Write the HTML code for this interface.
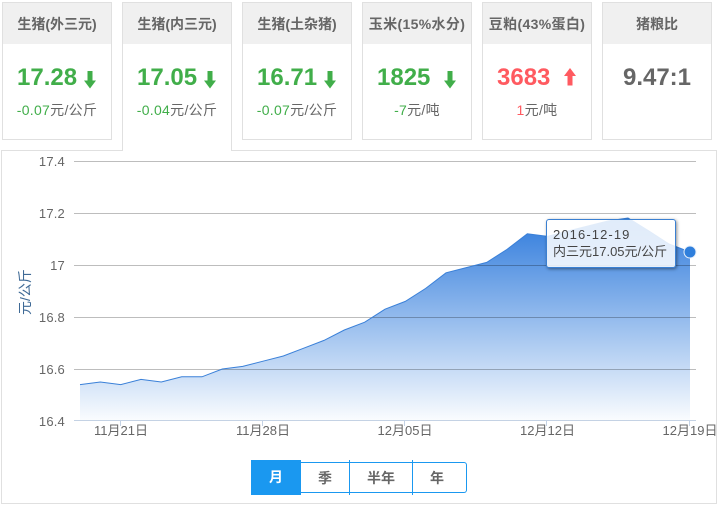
<!DOCTYPE html>
<html><head><meta charset="utf-8">
<style>
*{box-sizing:border-box}
html,body{margin:0;padding:0;background:#fff}
body{width:722px;height:510px;overflow:hidden;position:relative;font-family:"Liberation Sans","Noto Sans CJK SC",sans-serif;color:#666}
.card{position:absolute;top:2px;width:110px;height:138px;border:1px solid #e0e0e0;background:#fff;text-align:center}
.card .h{height:41px;background:#f0f0f0;font-size:14px;font-weight:bold;line-height:42px;color:#666;white-space:nowrap}
.card .w{letter-spacing:.35px}
.card .n{position:absolute;left:14px;top:61px;font-size:24px;font-weight:bold;line-height:28px;white-space:nowrap}
.card .s{position:absolute;left:0;right:0;top:98px;font-size:14px;line-height:18px;letter-spacing:.3px;white-space:nowrap}
.g{color:#41ae4a}.r{color:#ff5a60}
.card svg{position:absolute;left:81px;top:68px}
.tab{height:149px;border-bottom:0;z-index:3}
.box{position:absolute;left:1px;top:150px;width:716px;height:354px;border:1px solid #e0e0e0;background:#fff}
.tip{position:absolute;left:546px;top:219px;width:130px;height:49px;border:1px solid #3a80d2;border-radius:3px;background:rgba(255,255,255,.85);box-shadow:1px 1px 3px rgba(0,0,0,.45);font-size:13px;line-height:17px;padding:6px 0 0 6px;color:#444;white-space:nowrap;z-index:4}
.tip span{letter-spacing:1.1px}
.btns{position:absolute;left:0;top:0;font-size:14px;font-weight:bold;z-index:4}
.btns div{position:absolute;text-align:center;color:#666;white-space:nowrap}
</style></head><body>
<div class="box"></div>
<div class="card" style="left:2px"><div class="h">生猪(外三元)</div><div class="n g">17.28</div><svg width="14" height="20" viewBox="0 0 14 20"><path d="M3.500 0h5v9.500h3.500L6 17.500 0 9.500h3.500z" fill="#41ae4a"/></svg><div class="s"><span class="g">-0.07</span>元/公斤</div></div>
<div class="card tab" style="left:122px"><div class="h">生猪(内三元)</div><div class="n g">17.05</div><svg width="14" height="20" viewBox="0 0 14 20"><path d="M3.500 0h5v9.500h3.500L6 17.500 0 9.500h3.500z" fill="#41ae4a"/></svg><div class="s"><span class="g">-0.04</span>元/公斤</div></div>
<div class="card" style="left:242px"><div class="h">生猪(土杂猪)</div><div class="n g">16.71</div><svg width="14" height="20" viewBox="0 0 14 20"><path d="M3.500 0h5v9.500h3.500L6 17.500 0 9.500h3.500z" fill="#41ae4a"/></svg><div class="s"><span class="g">-0.07</span>元/公斤</div></div>
<div class="card" style="left:362px"><div class="h w">玉米(15%水分)</div><div class="n g">1825</div><svg width="14" height="20" viewBox="0 0 14 20"><path d="M3.500 0h5v9.500h3.500L6 17.500 0 9.500h3.500z" fill="#41ae4a"/></svg><div class="s"><span class="g">-7</span>元/吨</div></div>
<div class="card" style="left:482px"><div class="h w">豆粕(43%蛋白)</div><div class="n r">3683</div><svg width="14" height="20" viewBox="0 0 14 20" style="top:65px"><path d="M3.500 17.500h5V8h3.500L6 0 0 8h3.500z" fill="#ff5a60"/></svg><div class="s"><span class="r">1</span>元/吨</div></div>
<div class="card" style="left:602px"><div class="h">猪粮比</div><div class="n" style="left:0;right:0;color:#666">9.47:1</div></div>

<svg width="722" height="510" viewBox="0 0 722 510" style="position:absolute;left:0;top:0;z-index:2;pointer-events:none">
<defs><linearGradient id="a" x1="0" y1="218" x2="0" y2="421" gradientUnits="userSpaceOnUse"><stop offset="0" stop-color="#2f7bdc"/><stop offset="1" stop-color="#2f7bdc" stop-opacity=".02"/></linearGradient></defs>
<path d="M80 421V384.600L100.300 382 120.700 384.600 141 379.400 161.300 382 181.700 376.800 202 376.800 222.300 369 242.700 366.400 263 361.200 283.300 356 303.700 348.200 324 340.400 344.300 330 364.700 322.200 385 309.200 405.300 301.400 425.700 288.400 446 272.800 466.300 267.600 486.700 262.400 507 249.400 527.300 233.800 547.700 236.400 568 231 588 226 608 221 628 218 649 231 669 244 690 252V421Z" fill="url(#a)"/>
<path d="M74 161.500H696M74 213.500H696M74 265.500H696M74 317.500H696M74 369.500H696" stroke="#000" stroke-opacity=".26" stroke-width="1" fill="none"/>
<path d="M80 384.600L100.300 382 120.700 384.600 141 379.400 161.300 382 181.700 376.800 202 376.800 222.300 369 242.700 366.400 263 361.200 283.300 356 303.700 348.200 324 340.400 344.300 330 364.700 322.200 385 309.200 405.300 301.400 425.700 288.400 446 272.800 466.300 267.600 486.700 262.400 507 249.400 527.300 233.800 547.700 236.400 568 231 588 226 608 221 628 218 649 231 669 244 690 252" fill="none" stroke="#3a80d8" stroke-width="1"/>
<path d="M74 420.500H696M120.500 420V426M262.500 420V426M404.500 420V426M546.500 420V426M689.500 420V426" stroke="#c4d2e4" fill="none"/>
<circle cx="690" cy="252" r="6" fill="#2f7fdc" stroke="#e8f0fa" stroke-width="1"/>
<g font-family="Liberation Sans,Noto Sans CJK SC,sans-serif" font-size="13" fill="#666">
<g text-anchor="end" letter-spacing=".2"><text x="65" y="166">17.4</text><text x="65" y="218">17.2</text><text x="65" y="270">17</text><text x="65" y="322">16.8</text><text x="65" y="374">16.6</text><text x="65" y="426">16.4</text></g>
<g text-anchor="middle"><text x="121" y="435">11月21日</text><text x="263" y="435">11月28日</text><text x="405" y="435">12月05日</text><text x="547.500" y="435">12月12日</text><text x="690" y="435">12月19日</text></g>
<text transform="translate(30 315) rotate(-90)" font-size="14" fill="#3f6a96">元/公斤</text>
</g>
</svg>
<div class="tip"><span>2016-12-19</span><br>内三元17.05元/公斤</div>
<div class="btns">
<div style="left:301px;top:462px;width:166px;height:31px;border:1px solid #1a98f0;border-left:0;border-radius:0 3px 3px 0"></div>
<div style="left:251px;top:460px;width:50px;height:35px;line-height:35px;background:#1a98f0;color:#fff">月</div>
<div style="left:349px;top:460px;width:1px;height:35px;background:#1a98f0"></div>
<div style="left:412px;top:460px;width:1px;height:35px;background:#1a98f0"></div>
<div style="left:301px;top:461px;width:48px;line-height:35px">季</div>
<div style="left:350px;top:461px;width:62px;line-height:35px">半年</div>
<div style="left:413px;top:461px;width:48px;line-height:35px">年</div>
</div>
</body></html>
